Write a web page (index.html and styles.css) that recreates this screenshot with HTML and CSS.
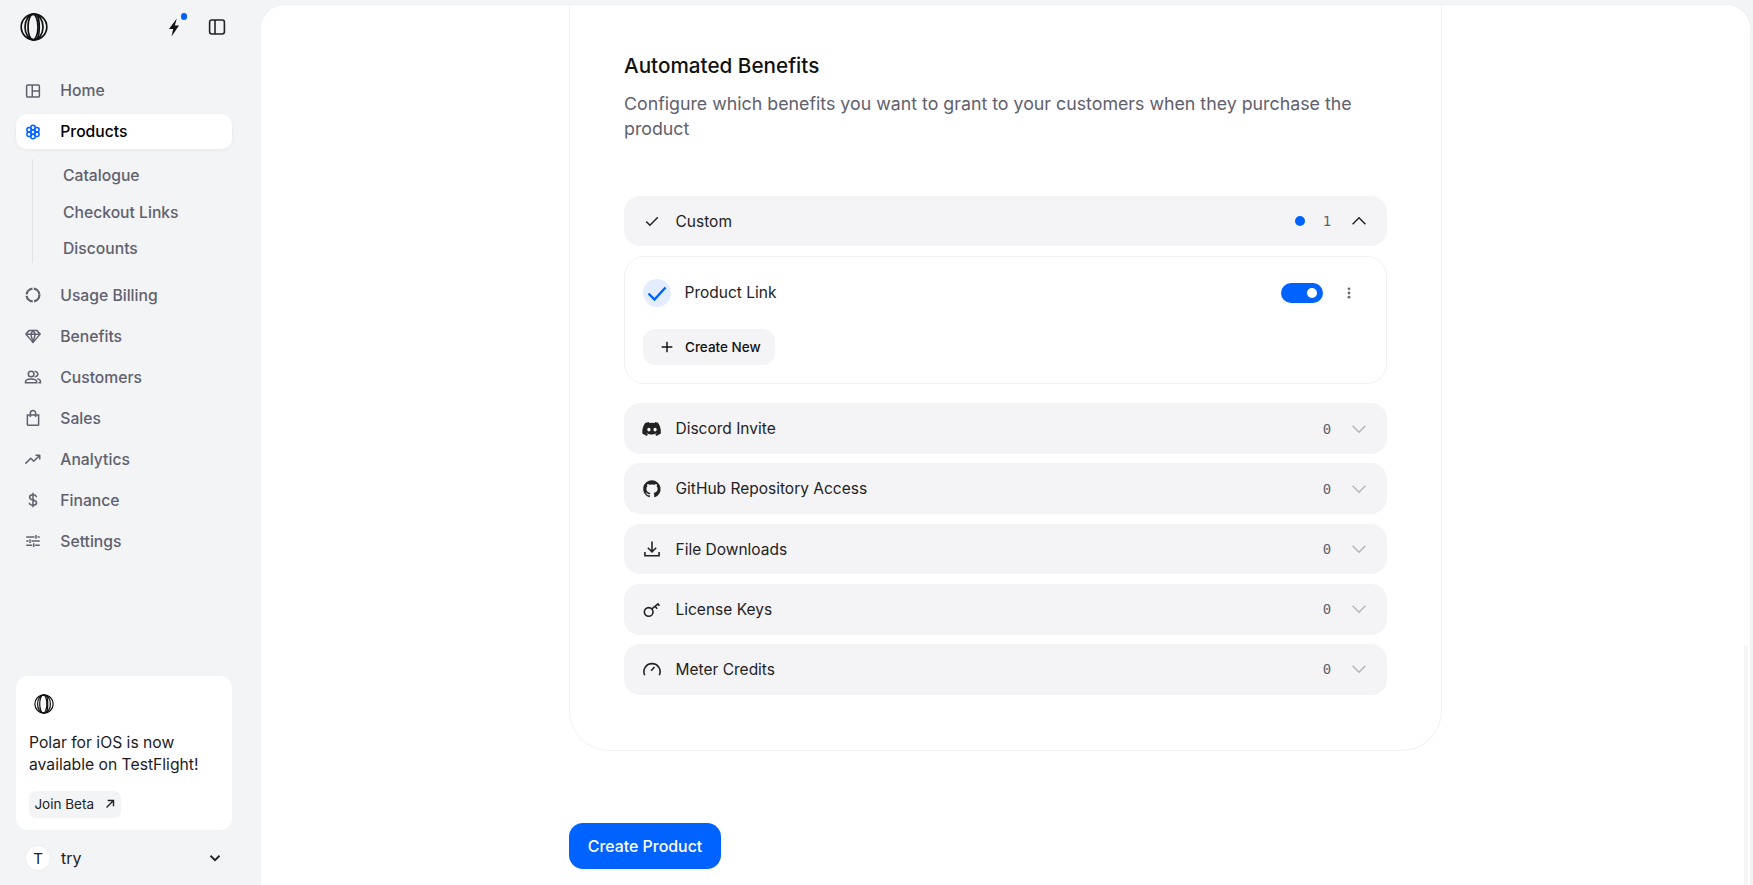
FILE: index.html
```html
<!DOCTYPE html>
<html lang="en">
<head>
    <meta charset="UTF-8">
    <meta name="viewport" content="width=device-width, initial-scale=1.0">
    <title>Create Product</title>
    <link rel="stylesheet" href="styles.css">
</head>
<body>
    <svg class="defs" width="0" height="0">
        <symbol id="polar" viewBox="0 0 28 28">
            <g fill="none" stroke="currentColor" stroke-width="1.7">
                <circle cx="14" cy="14" r="12.8"/>
                <ellipse cx="14" cy="14" rx="9" ry="12.8"/>
                <ellipse cx="13" cy="14" rx="5" ry="12.8"/>
                <path d="M17 1.500c3 5 3 20 0 25"/>
            </g>
        </symbol>
    </svg>

    <aside class="sidebar">
        <div class="top">
            <svg class="logo"><use href="#polar"/></svg>
            <div class="top-icons">
                <span class="bolt">
                    <svg width="24" height="24" viewBox="0 0 24 24" fill="#111"><path d="M14.800 3.500 7 14h4.200l-1.700 7.500L17 10.500h-4.200z"/></svg>
                    <i class="dot"></i>
                </span>
                <svg width="20" height="20" viewBox="0 0 20 20" fill="none" stroke="#222" stroke-width="1.6"><rect x="2.600" y="3" width="14.800" height="14" rx="2.200"/><path d="M8 3v14"/></svg>
            </div>
        </div>

        <nav class="nav">
            <a class="nav-item">
                <svg viewBox="0 0 24 24" fill="none" stroke="currentColor" stroke-width="2"><rect x="3.500" y="4" width="17" height="16" rx="1.500"/><path d="M11 4v16M11 12h9.500"/></svg>
                Home
            </a>
            <a class="nav-item active">
                <svg viewBox="0 0 24 24" fill="none" stroke="#0062ff" stroke-width="2"><circle cx="12" cy="12" r="3"/><circle cx="12" cy="6" r="3"/><circle cx="12" cy="18" r="3"/><circle cx="6.800" cy="9" r="3"/><circle cx="17.200" cy="9" r="3"/><circle cx="6.800" cy="15" r="3"/><circle cx="17.200" cy="15" r="3"/></svg>
                Products
            </a>
            <div class="subnav">
                <a>Catalogue</a>
                <a>Checkout Links</a>
                <a>Discounts</a>
            </div>
            <a class="nav-item">
                <svg viewBox="0 0 24 24" fill="none" stroke="currentColor" stroke-width="3"><circle cx="12" cy="12" r="8.500" stroke-dasharray="11.500 1.900"/></svg>
                Usage Billing
            </a>
            <a class="nav-item">
                <svg viewBox="0 0 24 24" fill="none" stroke="currentColor" stroke-width="2" stroke-linejoin="round"><path d="M7 4.500h10l4.500 5L12 20.500 2.500 9.500z"/><path d="M2.500 9.500h19M9 9.500l3 11 3-11M9 9.500l3-5 3 5"/></svg>
                Benefits
            </a>
            <a class="nav-item">
                <svg viewBox="0 0 24 24" fill="none" stroke="currentColor" stroke-width="2" stroke-linecap="round"><circle cx="9.500" cy="8" r="3.800"/><path d="M2 19.500v-1c0-2.500 3-4 7.500-4s7.500 1.500 7.500 4v1zM15 4.500c2.500.5 3.500 2 3.500 3.500s-1 3-3.500 3.500M18.500 14.500c2.200.6 3.500 2 3.500 4v1h-2"/></svg>
                Customers
            </a>
            <a class="nav-item">
                <svg viewBox="0 0 24 24" fill="none" stroke="currentColor" stroke-width="2"><path d="M4.500 8h15v12.500a1 1 0 0 1-1 1h-13a1 1 0 0 1-1-1z"/><path d="M8.500 10.500V5.500a3.500 3.500 0 0 1 7 0v5"/></svg>
                Sales
            </a>
            <a class="nav-item">
                <svg viewBox="0 0 24 24" fill="none" stroke="currentColor" stroke-width="2" stroke-linecap="round" stroke-linejoin="round"><path d="M2.500 17.500 9 11l4 4 8-8M16 7h5v5"/></svg>
                Analytics
            </a>
            <a class="nav-item">
                <svg viewBox="0 0 24 24" fill="none" stroke="currentColor" stroke-width="2" stroke-linecap="round"><path d="M12 3v18M16.500 7.500c-.5-1.500-2-2.500-4.500-2.500-2.800 0-4.500 1.400-4.500 3.400s1.700 3 4.500 3.600c2.800.6 4.700 1.500 4.700 3.700 0 2-1.900 3.300-4.700 3.300-2.600 0-4.400-1-4.900-2.800"/></svg>
                Finance
            </a>
            <a class="nav-item">
                <svg viewBox="0 0 24 24" fill="none" stroke="currentColor" stroke-width="2"><path d="M3 6.500h11M18 6.500h3M3 12h3M10 12h11M3 17.500h8M15 17.500h6M16 4v5M8 9.500v5M13 15v5"/></svg>
                Settings
            </a>
        </nav>

        <div class="promo">
            <svg class="promo-logo"><use href="#polar"/></svg>
            <p>Polar for iOS is now available on TestFlight!</p>
            <a class="promo-btn">
                Join Beta
                <svg width="14" height="14" viewBox="0 0 24 24" fill="none" stroke="#222" stroke-width="2.400"><path d="M6 18 18 6M8 6h10v10"/></svg>
            </a>
        </div>

        <div class="user">
            <span class="avatar">T</span>
            <span class="user-name">try</span>
            <svg width="18" height="18" viewBox="0 0 24 24" fill="none" stroke="#222" stroke-width="2.400"><path d="m6 9 6 6 6-6"/></svg>
        </div>
    </aside>

    <main class="main">
        <section class="card">
            <h2>Automated Benefits</h2>
            <p class="lead">Configure which benefits you want to grant to your customers when they purchase the product</p>

            <div class="benefits">
                <div class="row">
                    <svg class="row-icon" viewBox="0 0 24 24" fill="none" stroke="#222" stroke-width="1.800"><path d="m5 12.500 4.500 4.500L19 7.500"/></svg>
                    <span class="row-name">Custom</span>
                    <i class="row-dot"></i>
                    <span class="count">1</span>
                    <svg class="chev" viewBox="0 0 24 24" fill="none" stroke="#222" stroke-width="1.600"><path d="m5 15.500 7-7 7 7"/></svg>
                </div>

                <div class="panel">
                    <div class="benefit">
                        <span class="check">
                            <svg width="24" height="24" viewBox="0 0 24 24" fill="none" stroke="#0062ff" stroke-width="2.400"><path d="m3.500 12.500 6 6L20.500 6.500"/></svg>
                        </span>
                        <span class="benefit-name">Product Link</span>
                        <span class="toggle"><i></i></span>
                        <svg class="more" width="18" height="18" viewBox="0 0 18 18" fill="#6b6b72"><circle cx="9" cy="4.800" r="1.400"/><circle cx="9" cy="9" r="1.400"/><circle cx="9" cy="13.200" r="1.400"/></svg>
                    </div>
                    <a class="create-new">
                        <svg width="16" height="16" viewBox="0 0 24 24" fill="none" stroke="#111" stroke-width="2.200"><path d="M12 4v16M4 12h16"/></svg>
                        Create New
                    </a>
                </div>

                <div class="row">
                    <svg class="row-icon" viewBox="0 0 24 24" fill="#222"><path d="M20.300 4.900A18 18 0 0 0 15.800 3.500l-.6 1.200a17 17 0 0 0-6.400 0l-.6-1.200a18 18 0 0 0-4.500 1.400C.8 9.200.1 13.400.4 17.500a18 18 0 0 0 5.500 2.800l1.200-1.900-1.900-.9.5-.4a13 13 0 0 0 11.600 0l.5.4-1.900.9 1.200 1.900a18 18 0 0 0 5.500-2.800c.4-4.800-.7-9-3.300-12.600zM8.300 15c-1.100 0-2-1-2-2.300s.9-2.300 2-2.300 2 1 2 2.300-.9 2.300-2 2.300zm7.400 0c-1.100 0-2-1-2-2.300s.9-2.300 2-2.300 2 1 2 2.300-.9 2.300-2 2.300z"/></svg>
                    <span class="row-name">Discord Invite</span>
                    <span class="count">0</span>
                    <svg class="chev" viewBox="0 0 24 24" fill="none" stroke="#b4b4ba" stroke-width="1.600"><path d="m5 8.500 7 7 7-7"/></svg>
                </div>
                <div class="row">
                    <svg class="row-icon" viewBox="0 0 24 24" fill="#222"><path d="M12 1.500A10.500 10.500 0 0 0 8.700 22c.5.1.7-.2.7-.5v-2c-2.900.6-3.500-1.300-3.500-1.300-.5-1.200-1.200-1.500-1.200-1.500-.9-.6.1-.6.1-.6 1 .1 1.600 1.100 1.600 1.100.9 1.600 2.400 1.100 3 .9.1-.7.4-1.100.7-1.400-2.300-.3-4.800-1.200-4.800-5.200 0-1.100.4-2.100 1.100-2.800-.1-.3-.5-1.300.1-2.800 0 0 .9-.3 2.900 1.100a10 10 0 0 1 5.200 0c2-1.400 2.900-1.100 2.900-1.100.6 1.500.2 2.500.1 2.800.7.7 1.100 1.700 1.100 2.800 0 4-2.500 4.900-4.800 5.200.4.3.7.9.7 1.900v2.800c0 .3.2.6.7.5A10.500 10.500 0 0 0 12 1.500z"/></svg>
                    <span class="row-name">GitHub Repository Access</span>
                    <span class="count">0</span>
                    <svg class="chev" viewBox="0 0 24 24" fill="none" stroke="#b4b4ba" stroke-width="1.600"><path d="m5 8.500 7 7 7-7"/></svg>
                </div>
                <div class="row">
                    <svg class="row-icon" viewBox="0 0 24 24" fill="none" stroke="#222" stroke-width="1.900"><path d="M12 3v12.500M7 10.500l5 5 5-5M3.500 15.500v4.500h17v-4.500"/></svg>
                    <span class="row-name">File Downloads</span>
                    <span class="count">0</span>
                    <svg class="chev" viewBox="0 0 24 24" fill="none" stroke="#b4b4ba" stroke-width="1.600"><path d="m5 8.500 7 7 7-7"/></svg>
                </div>
                <div class="row">
                    <svg class="row-icon" viewBox="0 0 24 24" fill="none" stroke="#222" stroke-width="1.900"><circle cx="8" cy="15.500" r="5.200"/><path d="m11.800 11.800 8.200-6.600M15.500 8.800l2.800 3M19 6l2 2.200"/></svg>
                    <span class="row-name">License Keys</span>
                    <span class="count">0</span>
                    <svg class="chev" viewBox="0 0 24 24" fill="none" stroke="#b4b4ba" stroke-width="1.600"><path d="m5 8.500 7 7 7-7"/></svg>
                </div>
                <div class="row">
                    <svg class="row-icon" viewBox="0 0 24 24" fill="none" stroke="#222" stroke-width="1.900"><path d="M3.300 19.500a9.700 9.700 0 1 1 17.400 0M11 14l4-4.500"/></svg>
                    <span class="row-name">Meter Credits</span>
                    <span class="count">0</span>
                    <svg class="chev" viewBox="0 0 24 24" fill="none" stroke="#b4b4ba" stroke-width="1.600"><path d="m5 8.500 7 7 7-7"/></svg>
                </div>
            </div>
        </section>

        <button class="submit" type="button">Create Product</button>
        <div class="scroll-thumb"></div>
    </main>
</body>
</html>
```

FILE: styles.css
```css
* {
    box-sizing: border-box;
}
html, body {
    height: 100%;
    margin: 0;
}
body {
    display: flex;
    overflow: hidden;
    background-color: #f3f4f6;
    color: #111;
    font-family: Inter, "Liberation Sans", sans-serif;
    font-size: 15.7px;
}
.defs {
    position: absolute;
}

/* Sidebar */
.sidebar {
    display: flex;
    flex-direction: column;
    flex: none;
    width: 261px;
    height: 885px;
    padding: 0 29px 0 16px;
}
.top {
    display: flex;
    align-items: center;
    justify-content: space-between;
    height: 27px;
    margin-top: 13px;
    padding: 0 5px 0 4px;
}
.logo {
    width: 28px;
    height: 28px;
    color: #111;
}
.top-icons {
    display: flex;
    align-items: center;
    gap: 21px;
}
.bolt {
    position: relative;
    display: flex;
}
.dot {
    position: absolute;
    top: -1.5px;
    right: -1px;
    width: 6.5px;
    height: 6.5px;
    border-radius: 50%;
    background: #0062ff;
}
.nav {
    display: flex;
    flex-direction: column;
    margin-top: 33px;
}
.nav-item {
    display: flex;
    align-items: center;
    gap: 18.3px;
    height: 35px;
    margin-bottom: 6px;
    padding-left: 8px;
    border-radius: 10px;
    color: #60606e;
    font-weight: 500;
}
.nav-item svg {
    flex: none;
    width: 18px;
    height: 18px;
}
.nav-item.active {
    background: #fff;
    color: #000;
    box-shadow: 0 1px 4px rgba(0, 0, 0, 0.06);
}
.subnav {
    position: relative;
    display: flex;
    flex-direction: column;
    margin: 2.6px 0 11px 16px;
    color: #60606e;
    font-weight: 500;
}
.subnav::before {
    content: "";
    position: absolute;
    top: 1px;
    bottom: 4px;
    left: 0;
    width: 1px;
    background: #e2e3e6;
}
.subnav a {
    display: flex;
    align-items: center;
    height: 36.4px;
    padding-left: 47px;
    margin-left: -16px;
}
.promo {
    margin-top: auto;
    height: 154px;
    padding: 18px 13px 0;
    border-radius: 12px;
    background: #fff;
}
.promo-logo {
    display: block;
    width: 20px;
    height: 20px;
    margin-left: 5px;
    color: #111;
}
.promo p {
    margin: 17.5px 0 14px;
    line-height: 22.5px;
    color: #1b1b1f;
}
.promo-btn {
    display: inline-flex;
    align-items: center;
    gap: 9px;
    height: 27px;
    padding: 0 3.5px 0 5.4px;
    border-radius: 7px;
    background: #f3f4f6;
    font-size: 13.5px;
    color: #222;
}
.user {
    display: flex;
    align-items: center;
    height: 55px;
    padding: 1px 8px 0 10px;
    color: #222;
}
.avatar {
    display: flex;
    align-items: center;
    justify-content: center;
    width: 24px;
    height: 24px;
    margin-right: 11px;
    border-radius: 50%;
    background: #fff;
    box-shadow: 0 0 0 1px #eceef0;
    font-size: 15px;
}
.user-name {
    flex: 1;
    font-size: 16px;
}

/* Main panel */
.main {
    position: relative;
    flex: 1;
    height: 880px;
    margin: 5px 3px 0 0;
    overflow: hidden;
    border-radius: 24px 24px 0 0;
    background: #fff;
    box-shadow: 0 0 0 1px #f0f1f3;
}
.scroll-thumb {
    position: absolute;
    top: 640px;
    right: 2px;
    bottom: 0;
    width: 4px;
    background: #f6f6f7;
}
.card {
    width: 873px;
    height: 746px;
    margin-left: 308px;
    padding: 49px 54px 0;
    border: 1px solid #f0f1f3;
    border-top: 0;
    border-radius: 0 0 40px 40px;
}
h2 {
    margin: 0;
    font-size: 20.7px;
    font-weight: 500;
    line-height: 24px;
    color: #111;
}
.lead {
    margin: 13px 0 0;
    color: #60606e;
    font-size: 17.8px;
    line-height: 25.2px;
}
.benefits {
    display: flex;
    flex-direction: column;
    gap: 9.5px;
    margin-top: 54.3px;
}
.row {
    display: flex;
    align-items: center;
    height: 50.7px;
    padding: 0 17px 0 18px;
    border-radius: 16px;
    background: #f4f4f7;
    font-size: 15.5px;
}
.row-icon {
    flex: none;
    width: 20px;
    height: 20px;
    margin-right: 13.5px;
}
.row-name {
    flex: 1;
    color: #222;
}
.row-dot {
    width: 10px;
    height: 10px;
    margin-right: 17.4px;
    border-radius: 50%;
    background: #0062ff;
}
.count {
    margin-right: 16.8px;
    color: #5f5f6e;
    font-family: "DejaVu Sans Mono", "Liberation Mono", monospace;
    font-size: 14px;
}
.chev {
    flex: none;
    width: 22px;
    height: 22px;
}
.panel {
    height: 128.5px;
    margin-bottom: 9.4px;
    padding: 22px 18px 0;
    border: 1px solid #f0f1f3;
    border-radius: 20px;
}
.benefit {
    display: flex;
    align-items: center;
    height: 28px;
    color: #222;
    font-size: 15.5px;
}
.check {
    display: flex;
    align-items: center;
    justify-content: center;
    width: 28px;
    height: 28px;
    margin-right: 13.5px;
    border-radius: 50%;
    background: #e3edfd;
}
.benefit-name {
    flex: 1;
}
.toggle {
    display: flex;
    align-items: center;
    justify-content: flex-end;
    width: 42px;
    height: 20.5px;
    padding-right: 5.7px;
    border-radius: 11px;
    background: #0062ff;
}
.toggle i {
    width: 10px;
    height: 10px;
    border-radius: 50%;
    background: #fff;
}
.more {
    margin: 0 9.7px 0 17.6px;
}
.create-new {
    display: inline-flex;
    align-items: center;
    gap: 10px;
    height: 36.4px;
    margin-top: 22px;
    padding: 0 14px 0 16px;
    border-radius: 12px;
    background: #f4f4f7;
    font-size: 13.5px;
    font-weight: 500;
    color: #111;
}
.submit {
    display: block;
    width: 152px;
    height: 46px;
    margin: 72px 0 0 308px;
    border: none;
    border-radius: 14px;
    background: #0062ff;
    color: #fff;
    font-family: inherit;
    font-size: 15.9px;
    font-weight: 500;
}
```
